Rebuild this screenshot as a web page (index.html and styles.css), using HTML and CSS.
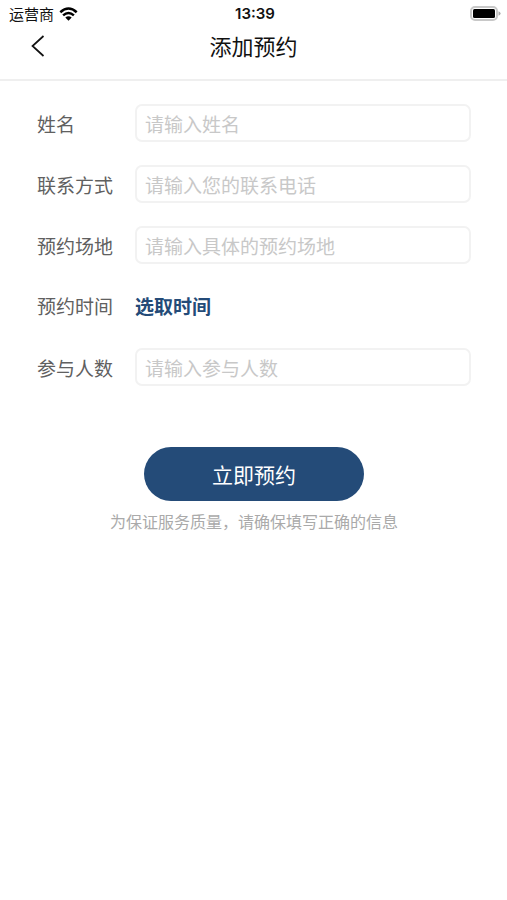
FILE: index.html
```html
<!DOCTYPE html>
<html lang="zh-CN">
<head>
<meta charset="utf-8">
<meta name="viewport" content="width=device-width, initial-scale=1">
<title>添加预约</title>
<link rel="stylesheet" href="styles.css">
</head>
<body>
<div class="status">
  <div class="carrier">
    <span>运营商</span>
    <svg class="wifi" viewBox="0 0 18 14" aria-hidden="true">
      <path d="M.8 5.2Q9-2.2 17.2 5.2M3.6 8.4Q9 3.6 14.4 8.4" fill="none" stroke="#000" stroke-width="2.5"/>
      <path d="M5.8 10.6Q9 7.9 12.2 10.6L9 13.8Z"/>
    </svg>
  </div>
  <time class="clock">13:39</time>
  <svg class="battery" viewBox="0 0 31 15" aria-hidden="true">
    <rect x="1" y="1" width="26" height="13" rx="4" fill="#fff" stroke="#c8c8c8" stroke-width="2"/>
    <rect x="3" y="3" width="22" height="9" rx="1.5"/>
    <path d="M28.5 5.2Q30.6 6 30.6 7.5T28.5 9.8Z" fill="#aaa"/>
  </svg>
</div>
<header class="navbar">
  <button class="back" type="button" aria-label="返回">
    <svg viewBox="0 0 14 22" aria-hidden="true"><path d="M12.5 1 1.5 11 12.5 21" fill="none" stroke="#111" stroke-width="1.7"/></svg>
  </button>
  <h1>添加预约</h1>
</header>
<main>
  <form class="booking">
    <div class="row">
      <label for="name">姓名</label>
      <input id="name" type="text" placeholder="请输入姓名">
    </div>
    <div class="row">
      <label for="phone">联系方式</label>
      <input id="phone" type="tel" placeholder="请输入您的联系电话">
    </div>
    <div class="row">
      <label for="venue">预约场地</label>
      <input id="venue" type="text" placeholder="请输入具体的预约场地">
    </div>
    <div class="row">
      <label for="time">预约时间</label>
      <button class="pick" id="time" type="button">选取时间</button>
    </div>
    <div class="row">
      <label for="people">参与人数</label>
      <input id="people" type="text" inputmode="numeric" placeholder="请输入参与人数">
    </div>
    <button class="submit" type="submit">立即预约</button>
    <p class="note">为保证服务质量，请确保填写正确的信息</p>
  </form>
</main>
</body>
</html>
```
FILE: styles.css
```css
* {
  box-sizing: border-box;
}

body {
  margin: 0;
  background: #fff;
  color: #111;
  font-family: "Noto Sans CJK SC", sans-serif;
}

button,
input {
  font: inherit;
}

svg {
  display: block;
}

.status {
  display: grid;
  grid-template-columns: 1fr auto 1fr;
  align-items: center;
  height: 27px;
  padding: 0 6px 0 9px;
  font-size: 15px;
  line-height: 27px;
}

.carrier {
  display: flex;
  align-items: center;
  gap: 5px;
}

.wifi {
  width: 19px;
  height: 14px;
}

.clock {
  font-family: Inter, sans-serif;
  font-size: 15px;
  font-weight: 600;
}

.battery {
  justify-self: end;
  width: 31px;
  height: 15px;
}

.navbar {
  display: grid;
  grid-template-columns: 60px 1fr 60px;
  height: 54px;
  padding-bottom: 14px;
  border-bottom: 2px solid #efefef;
}

.navbar h1 {
  margin: 0;
  font-size: 22px;
  font-weight: 400;
  line-height: 36px;
  text-align: center;
}

.back {
  display: flex;
  align-items: center;
  padding: 0 0 0 31px;
  border: 0;
  background: none;
}

.back svg {
  width: 14px;
  height: 22px;
}

.booking {
  display: flex;
  flex-direction: column;
  gap: 24px;
  padding: 23px 36px 24px 37px;
}

.row {
  display: grid;
  grid-template-columns: 98px 1fr;
  align-items: center;
  height: 37px;
  font-size: 19px;
}

.row label {
  color: #606060;
}

.row input {
  width: 100%;
  height: 38px;
  padding: 0 8px;
  border: 2px solid #f2f2f2;
  border-radius: 7px;
  background: #fff;
  color: #333;
}

.row input::placeholder {
  color: #c8c8c8;
  opacity: 1;
}

.pick {
  justify-self: start;
  padding: 0;
  border: 0;
  background: none;
  color: #244b78;
  font-weight: 700;
}

.submit {
  align-self: center;
  width: 220px;
  height: 54px;
  margin-top: 38px;
  padding: 0;
  border: 0;
  border-radius: 27px;
  background: #244b78;
  color: #fff;
  font-size: 21px;
}

.note {
  margin: -16px 0 0;
  color: #aaa;
  font-size: 16px;
  line-height: 24px;
  text-align: center;
}
```
